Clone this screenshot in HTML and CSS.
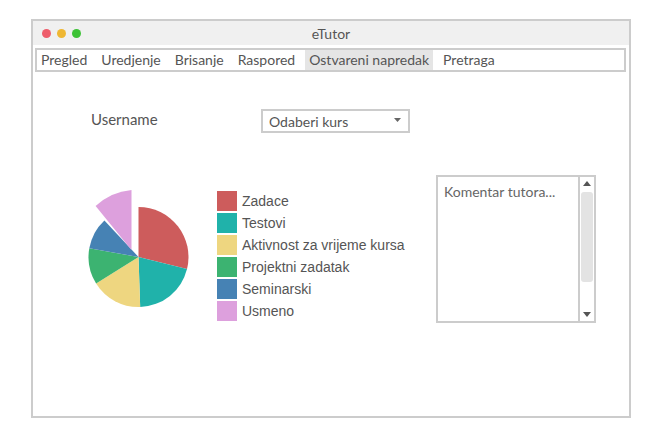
FILE: index.html
```html
<!DOCTYPE html>
<html lang="en">
<head>
    <meta charset="UTF-8">
    <title>eTutor</title>
    <link rel="stylesheet" href="styles.css">
</head>
<body>
    <div class="window">
        <div class="titlebar">
            <div class="lights">
                <span class="light red"></span>
                <span class="light yellow"></span>
                <span class="light green"></span>
            </div>
            <span class="title">eTutor</span>
        </div>

        <!-- Menu -->
        <div class="menu">
            <span class="menu-item">Pregled</span>
            <span class="menu-item">Uredjenje</span>
            <span class="menu-item">Brisanje</span>
            <span class="menu-item">Raspored</span>
            <span class="menu-item active">Ostvareni napredak</span>
            <span class="menu-item">Pretraga</span>
        </div>

        <div class="content">
            <div class="top-row">
                <span class="username">Username</span>
                <div class="select">
                    <span>Odaberi kurs</span>
                    <svg class="select-arrow" width="7" height="4" viewBox="0 0 7 4"><polygon points="0,0 7,0 3.5,4" fill="#666"/></svg>
                </div>
            </div>

            <div class="chart-row">
                <!-- Pie chart -->
                <svg class="pie" width="120" height="140" viewBox="80 180 120 140">
                    <path d="M138.5 257 L138.5 207 A50 50 0 0 1 187 269.1 Z" fill="#cd5c5c"/>
                    <path d="M138.5 257 L187 269.1 A50 50 0 0 1 140.2 307 Z" fill="#20b2aa"/>
                    <path d="M138.5 257 L140.2 307 A50 50 0 0 1 96.1 283.5 Z" fill="#eed680"/>
                    <path d="M138.5 257 L96.1 283.5 A50 50 0 0 1 89.3 248.3 Z" fill="#3cb371"/>
                    <path d="M138.5 257 L89.3 248.3 A50 50 0 0 1 104.4 220.4 Z" fill="#4682b4"/>
                    <path d="M131.5 250 L95.6 206.1 A60 60 0 0 1 131.5 190 Z" fill="#dda0dd"/>
                </svg>

                <div class="legend">
                    <div class="legend-item"><span class="swatch" style="background:#cd5c5c"></span>Zadace</div>
                    <div class="legend-item"><span class="swatch" style="background:#20b2aa"></span>Testovi</div>
                    <div class="legend-item"><span class="swatch" style="background:#eed680"></span>Aktivnost za vrijeme kursa</div>
                    <div class="legend-item"><span class="swatch" style="background:#3cb371"></span>Projektni zadatak</div>
                    <div class="legend-item"><span class="swatch" style="background:#4682b4"></span>Seminarski</div>
                    <div class="legend-item"><span class="swatch" style="background:#dda0dd"></span>Usmeno</div>
                </div>

                <!-- Tutor comment -->
                <div class="comment">
                    <div class="comment-text">Komentar tutora...</div>
                    <div class="scrollbar">
                        <svg width="8" height="5" viewBox="0 0 8 5"><polygon points="0,5 8,5 4,0" fill="#555"/></svg>
                        <div class="thumb"></div>
                        <svg width="8" height="5" viewBox="0 0 8 5"><polygon points="0,0 8,0 4,5" fill="#555"/></svg>
                    </div>
                </div>
            </div>
        </div>
    </div>
</body>
</html>
```

FILE: styles.css
```css
body {
    margin: 0;
    padding: 0;
    background: #fff;
    font-family: Lato, "Liberation Sans", sans-serif;
    color: #555;
}

.window {
    width: 596px;
    height: 395px;
    margin: 19px 0 0 31px;
    border: 2px solid #ccc;
    background: #fff;
}

.titlebar {
    height: 24px;
    background: #f0f0f0;
    display: flex;
    align-items: center;
    position: relative;
}

.lights {
    display: flex;
    gap: 6px;
    margin-left: 9px;
}

.light {
    width: 9px;
    height: 9px;
    border-radius: 50%;
}

.red { background: #ee5d6b; }
.yellow { background: #efb733; }
.green { background: #3dc236; }

.title {
    position: absolute;
    left: 0;
    right: 0;
    text-align: center;
    font-size: 14px;
    color: #555;
}

.menu {
    display: flex;
    gap: 6px;
    margin: 3px 3px 0 2px;
    height: 20px;
    border: 2px solid #ccc;
    font-size: 14px;
}

.menu-item {
    padding: 0 4px;
    line-height: 20px;
    color: #555;
}

.menu-item.active {
    background: #e5e5e5;
}

.content {
    padding: 37px 0 0 58px;
}

.top-row {
    display: flex;
    align-items: center;
    height: 24px;
}

.username {
    font-size: 15px;
    width: 170px;
    margin-top: -4px;
    color: #555;
}

.select {
    height: 20px;
    border: 2px solid #ccc;
    display: flex;
    align-items: center;
    justify-content: space-between;
    padding: 0 7px 0 6px;
    font-size: 14px;
    color: #555;
    width: 132px;
}

.select-arrow {
    margin-top: -2px;
}

.chart-row {
    display: flex;
    align-items: flex-start;
    margin-top: 42px;
    margin-left: -11px;
}

.pie {
    display: block;
    margin-top: 5px;
}

.legend {
    margin: 16px 0 0 17px;
    width: 219px;
    font-family: "Liberation Sans", Arial, sans-serif;
    font-size: 14px;
    color: #555;
}

.legend-item {
    display: flex;
    align-items: center;
    height: 20px;
    margin-bottom: 2px;
}

.swatch {
    width: 20px;
    height: 20px;
    margin-right: 5px;
}

.comment {
    display: flex;
    width: 156px;
    height: 144px;
    border: 2px solid #ccc;
}

.comment-text {
    flex: 1;
    padding: 6px 6px;
    font-size: 14px;
    color: #666;
}

.scrollbar {
    width: 14px;
    border-left: 2px solid #ccc;
    display: flex;
    flex-direction: column;
    align-items: center;
    padding: 4px 0;
}

.thumb {
    width: 12px;
    height: 90px;
    margin: 6px 0 auto;
    background: #e3e3e3;
    border-radius: 3px;
}
```
